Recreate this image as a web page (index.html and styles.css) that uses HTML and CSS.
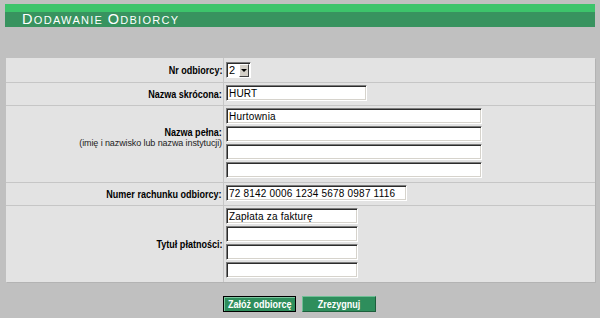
FILE: index.html
```html
<!DOCTYPE html>
<html lang="pl">
<head>
<meta charset="utf-8">
<title>Dodawanie odbiorcy</title>
<link rel="stylesheet" href="styles.css">
</head>
<body>
<div class="header">
  <div class="header-top"></div>
  <h1 class="title"><span class="cap">D</span>odawanie <span class="cap">O</span>dbiorcy</h1>
</div>

<form class="panel">
  <div class="row row-first">
    <div class="label"><span class="lt">Nr odbiorcy:</span></div>
    <div class="value value-select">
      <div class="select"><span class="select-text">2</span><span class="select-arrow"><span class="tri"></span></span></div>
    </div>
  </div>
  <div class="row">
    <div class="label"><span class="lt">Nazwa skrócona:</span></div>
    <div class="value"><input class="inp w-short" type="text" value="HURT"></div>
  </div>
  <div class="row">
    <div class="label label-shift">
      <div class="label-stack">
        <span class="lt">Nazwa pełna:</span>
        <span class="hint">(imię i nazwisko lub nazwa instytucji)</span>
      </div>
    </div>
    <div class="value">
      <input class="inp w-long" type="text" value="Hurtownia">
      <input class="inp w-long" type="text" value="">
      <input class="inp w-long" type="text" value="">
      <input class="inp w-long" type="text" value="">
    </div>
  </div>
  <div class="row">
    <div class="label"><span class="lt">Numer rachunku odbiorcy:</span></div>
    <div class="value"><input class="inp w-acct" type="text" value="72 8142 0006 1234 5678 0987 1116"></div>
  </div>
  <div class="row">
    <div class="label"><span class="lt">Tytuł płatności:</span></div>
    <div class="value">
      <input class="inp w-title" type="text" value="Zapłata za fakturę">
      <input class="inp w-title" type="text" value="">
      <input class="inp w-title" type="text" value="">
      <input class="inp w-title" type="text" value="">
    </div>
  </div>
</form>

<div class="buttons">
  <button class="btn btn-default" type="button"><span class="bt">Załóż odbiorcę</span></button>
  <button class="btn" type="button"><span class="bt">Zrezygnuj</span></button>
</div>
</body>
</html>
```

FILE: styles.css
```css
html, body {
  margin: 0;
  padding: 0;
}
body {
  background: #c0c0c0;
  width: 600px;
  height: 318px;
  overflow: hidden;
  font-family: "Liberation Sans", Arial, sans-serif;
}

.header {
  margin: 4px 5px 0 5px;
}
.header-top {
  height: 8px;
  background: #3dc46b;
}
.title {
  margin: 0;
  height: 15px;
  line-height: 15px;
  padding-left: 17px;
  background: #38935f;
  color: #ffffff;
  font-family: "Liberation Sans", Arial, sans-serif;
  font-weight: normal;
  font-size: 11px;
  text-transform: uppercase;
  letter-spacing: 1.3px;
}
.cap {
  font-size: 14.5px;
}

.panel {
  margin: 31px 0 0 6px;
  width: 589px;
  background: #e3e3e3;
  box-shadow: 1px 1px 0 #b3b3b3;
}
.row {
  display: flex;
  border-top: 1px solid #c6c6c6;
}
.row-first {
  border-top: none;
}
.label {
  width: 216px;
  padding-right: 1px;
  border-right: 1px solid #c6c6c6;
  display: flex;
  align-items: center;
  justify-content: flex-end;
  text-align: right;
  font-weight: bold;
  font-size: 11px;
  color: #000;
}
.lt {
  display: inline-block;
  white-space: nowrap;
  transform: scaleX(0.82);
  transform-origin: right center;
}
.label-shift {
  padding-bottom: 13px;
}
.label-stack {
  display: flex;
  flex-direction: column;
  align-items: flex-end;
  line-height: 11px;
}
.hint {
  font-weight: normal;
  font-size: 9px;
  color: #222;
  letter-spacing: -0.1px;
}

.value {
  flex: 1;
  display: flex;
  flex-direction: column;
  align-items: flex-start;
  gap: 2px;
  padding: 2px 0 4px 2px;
}
.value-select {
  padding: 4px 0 4px 2px;
}

.inp {
  box-sizing: border-box;
  height: 16px;
  margin: 0;
  padding: 0 2px;
  border: 1px solid;
  border-color: #7c7c7c #ffffff #ffffff #7c7c7c;
  box-shadow: inset 1px 1px 0 #2c2c2c, inset -1px -1px 0 #d6d3cc;
  background: #ffffff;
  font-family: "Liberation Sans", Arial, sans-serif;
  font-size: 10px;
  letter-spacing: 0.2px;
  color: #000;
  outline: none;
}
.w-short { width: 141px; }
.w-long { width: 256px; }
.w-acct { width: 181px; }
.w-title { width: 132px; }

.select {
  box-sizing: border-box;
  width: 25px;
  height: 16px;
  display: flex;
  align-items: stretch;
  border: 1px solid;
  border-color: #7c7c7c #ffffff #ffffff #7c7c7c;
  box-shadow: inset 1px 1px 0 #2c2c2c;
  background: #fff;
  padding: 1px 1px 0 1px;
}
.select-text {
  flex: 1;
  font-size: 11px;
  line-height: 13px;
  padding-left: 1px;
}
.select-arrow {
  width: 10px;
  background: #d4d0c8;
  border: 1px solid;
  border-color: #ffffff #404040 #404040 #ffffff;
  box-sizing: border-box;
  display: flex;
  align-items: center;
  justify-content: center;
}
.tri {
  width: 0;
  height: 0;
  border-left: 3px solid transparent;
  border-right: 3px solid transparent;
  border-top: 3px solid #000;
}

.buttons {
  display: flex;
  justify-content: center;
  gap: 6px;
  margin-top: 14px;
  padding-right: 1px;
}
.btn {
  box-sizing: border-box;
  height: 16px;
  margin: 0;
  padding: 0;
  display: flex;
  align-items: center;
  justify-content: center;
  overflow: hidden;
  background: #2e8e5c;
  color: #ffffff;
  font-family: "Liberation Sans", Arial, sans-serif;
  font-weight: bold;
  font-size: 11px;
  line-height: 12px;
  border: 1px solid;
  border-color: #6fbf95 #1d5e3c #1d5e3c #6fbf95;
  width: 74px;
}
.bt {
  display: inline-block;
  white-space: nowrap;
  transform: scaleX(0.82);
  transform-origin: center center;
}
.btn-default {
  width: 73px;
  border: 1px solid #000;
  box-shadow: inset 1px 1px 0 #7cc7a0;
}
```
